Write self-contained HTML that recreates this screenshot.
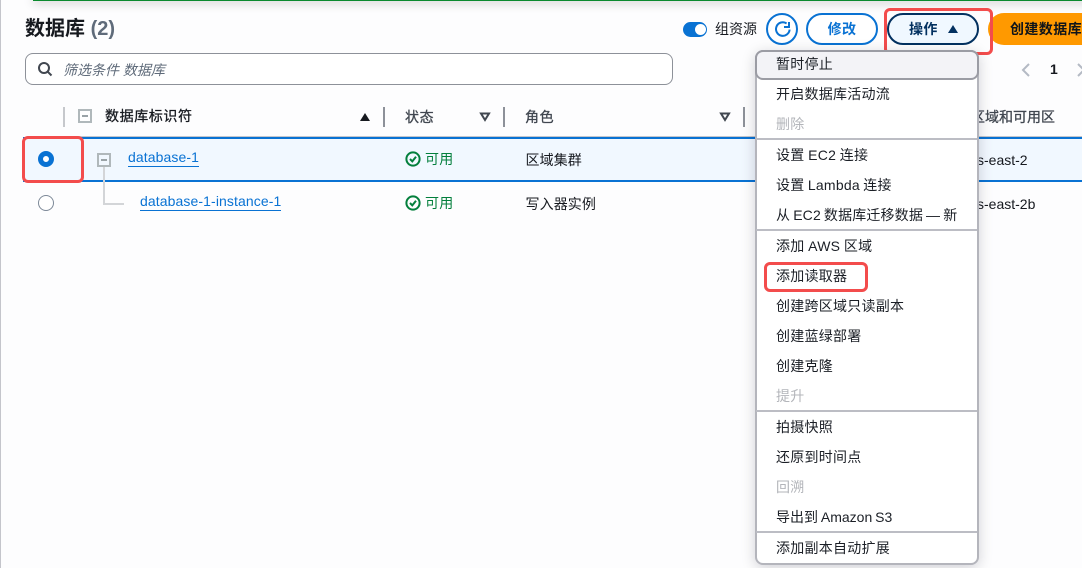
<!DOCTYPE html>
<html lang="zh"><head><meta charset="utf-8"><style>
html,body{margin:0;padding:0}
body{width:1082px;height:568px;position:relative;overflow:hidden;background:#fdfdfe;font-family:"Liberation Sans","Noto Sans CJK SC",sans-serif;font-size:14px;color:#16191f}
.a{position:absolute;white-space:nowrap;line-height:20px}
.b{position:absolute}
.lnk{color:#0972d3;border-bottom:1px solid #0972d3;line-height:17px;letter-spacing:.1px}
.sep{position:absolute;width:2px;height:20px;top:107px;background:#8d9199}
.hd{font-weight:400;color:#414750;letter-spacing:.6px;-webkit-text-stroke:.3px #414750}
.mi{position:absolute;left:776px;line-height:20px;white-space:nowrap;letter-spacing:.25px;color:#1b1f26}
.dis{color:#b3b5ba}
.div{position:absolute;left:756px;width:221px;height:2px;background:#bcbdc4}
.red{position:absolute;border:3px solid #f34c4c;border-radius:6px;box-sizing:border-box}
.btn{font-weight:700;font-size:14px;letter-spacing:.4px}
</style></head><body>
<div class="b" style="left:0;top:0;width:1px;height:568px;background:#c4c5cb"></div>
<div class="b" style="left:33px;top:-4px;width:1060px;height:5px;background:#0a8a2e;box-shadow:0 2px 10px rgba(0,0,0,.24)"></div>
<div class="a" style="left:25px;top:17px;font-size:20px;line-height:24px;font-weight:700;color:#16191f">数据库 <span style="color:#5f6b7a">(2)</span></div>
<div class="b" style="left:25px;top:53px;width:648px;height:32px;box-sizing:border-box;border:1px solid #8d9199;border-radius:8px;background:#fff"></div>
<svg class="b" style="left:37px;top:61px" width="16" height="16" viewBox="0 0 16 16" fill="none" stroke="#414750" stroke-width="2"><circle cx="7" cy="7" r="5"/><path d="M10.7 10.7 14.5 14.5"/></svg>
<div class="a" style="left:63px;top:60px;font-style:italic;color:#5f6b7a;font-size:14px">筛选条件 数据库</div>
<div class="b" style="left:683px;top:22px;width:24px;height:15px;border-radius:8px;background:#0972d3"></div>
<div class="b" style="left:695px;top:24px;width:11px;height:11px;border-radius:50%;background:#fff"></div>
<div class="a" style="left:715px;top:19px;font-size:14px;color:#16191f">组资源</div>
<div class="b" style="left:766px;top:13px;width:32px;height:32px;box-sizing:border-box;border:2px solid #0972d3;border-radius:50%;background:#fff"></div>
<svg class="b" style="left:775px;top:21px" width="16" height="16" viewBox="0 0 16 16" fill="none" stroke="#0972d3" stroke-width="2"><path d="M14.6 8.6A6.8 6.8 0 1 1 11.6 2.4"/><path d="M14 1V6H9"/></svg>
<div class="a btn" style="left:806px;top:13px;width:72px;height:32px;box-sizing:border-box;border:2px solid #0972d3;border-radius:16px;background:#fff;color:#0972d3;text-align:center;line-height:28px">修改</div>
<div class="b" style="left:887px;top:13px;width:92px;height:32px;box-sizing:border-box;border:2px solid #033160;border-radius:16px;background:#f0f8ff"></div>
<div class="a btn" style="left:909px;top:19px;color:#033160">操作</div>
<div class="b" style="left:948px;top:25px;width:0;height:0;border-left:5.5px solid transparent;border-right:5.5px solid transparent;border-bottom:8px solid #033160"></div>
<div class="b" style="left:988px;top:13px;width:110px;height:32px;border-radius:16px;background:#ff9900"></div>
<div class="a btn" style="left:1010px;top:19px;color:#0f141a">创建数据库</div>
<div class="red" style="left:884px;top:8px;width:109px;height:47px"></div>
<svg class="b" style="left:1021px;top:62px" width="10" height="16" viewBox="0 0 10 16" fill="none" stroke="#b4bac4" stroke-width="2"><path d="M8 2 2 8 8 14"/></svg>
<div class="a" style="left:1050px;top:59px;font-weight:700;font-size:14px;color:#16191f">1</div>
<svg class="b" style="left:1076px;top:62px" width="10" height="16" viewBox="0 0 10 16" fill="none" stroke="#b4bac4" stroke-width="2"><path d="M2 2 8 8 2 14"/></svg>

<div class="b" style="left:63px;top:107px;width:2px;height:20px;background:#c6c8cc"></div>
<div class="b" style="left:78px;top:109px;width:14px;height:14px;box-sizing:border-box;border:2px solid #b0b8bb;background:#fff"></div>
<div class="b" style="left:82px;top:115px;width:6px;height:2px;background:#9aa3a7"></div>
<div class="a hd" style="left:105px;top:106px;color:#16191f;-webkit-text-stroke:.3px #16191f">数据库标识符</div>
<div class="b" style="left:360px;top:113px;width:0;height:0;border-left:5.5px solid transparent;border-right:5.5px solid transparent;border-bottom:8px solid #16191f"></div>
<div class="sep" style="left:383px"></div>
<div class="a hd" style="left:405px;top:107px">状态</div>
<svg class="b" style="left:479px;top:112px" width="12" height="10" viewBox="0 0 12 10" fill="none" stroke="#414750" stroke-width="2"><path d="M2 1.5H10L6 8Z"/></svg>
<div class="sep" style="left:503px"></div>
<div class="a hd" style="left:525px;top:107px">角色</div>
<svg class="b" style="left:719px;top:112px" width="12" height="10" viewBox="0 0 12 10" fill="none" stroke="#414750" stroke-width="2"><path d="M2 1.5H10L6 8Z"/></svg>
<div class="sep" style="left:743px"></div>
<div class="a hd" style="left:975px;top:107px;width:82px;overflow:hidden;letter-spacing:0"><span style="margin-left:-4px">区域和可用区</span></div>
<div class="b" style="left:63px;top:136px;width:1019px;height:1px;background:#c4c6cc"></div>
<div class="b" style="left:23px;top:137px;width:1059px;height:45px;box-sizing:border-box;border:2px solid #0972d3;border-right:0;background:#f1f8ff"></div>
<div class="red" style="left:22px;top:136px;width:62px;height:47px"></div>
<div class="b" style="left:38px;top:151px;width:16px;height:16px;box-sizing:border-box;border:5px solid #0972d3;border-radius:50%;background:#fff"></div>
<div class="b" style="left:97px;top:153px;width:14px;height:14px;box-sizing:border-box;border:2px solid #b0b8bb"></div>
<div class="b" style="left:101px;top:159px;width:6px;height:2px;background:#9aa3a7"></div>
<div class="a lnk" style="left:128px;top:149px">database-1</div>
<div class="b" style="left:103px;top:167px;width:2px;height:36px;background:#d3d5d8"></div>
<div class="b" style="left:103px;top:203px;width:21px;height:2px;background:#d3d5d8"></div>
<div class="b" style="left:38px;top:195px;width:16px;height:16px;box-sizing:border-box;border:1px solid #7d8998;border-radius:50%;background:#fff"></div>
<div class="a lnk" style="left:140px;top:193px">database-1-instance-1</div>
<svg class="b" style="left:405px;top:151px" width="16" height="16" viewBox="0 0 16 16" fill="none" stroke="#037f3c" stroke-width="2"><circle cx="8" cy="8" r="6.6"/><path d="M5 8 7.3 10.4 11 5.8"/></svg>
<div class="a" style="left:425px;top:149px;color:#037f3c;letter-spacing:.2px">可用</div>
<svg class="b" style="left:405px;top:195px" width="16" height="16" viewBox="0 0 16 16" fill="none" stroke="#037f3c" stroke-width="2"><circle cx="8" cy="8" r="6.6"/><path d="M5 8 7.3 10.4 11 5.8"/></svg>
<div class="a" style="left:425px;top:193px;color:#037f3c;letter-spacing:.2px">可用</div>
<div class="a" style="left:525.5px;top:150px;letter-spacing:.1px">区域集群</div>
<div class="a" style="left:525.5px;top:194px;letter-spacing:.1px">写入器实例</div>
<div class="a" style="left:978px;top:150px;width:60px;overflow:hidden"><span style="margin-left:-1px">s-east-2</span></div>
<div class="a" style="left:978px;top:194px;width:70px;overflow:hidden"><span style="margin-left:-1px">s-east-2b</span></div>

<div class="b" style="left:755px;top:50px;width:224px;height:515px;box-sizing:border-box;border:2px solid #b4b5bc;border-radius:8px;background:#fff;box-shadow:0 3px 14px rgba(0,0,30,.18)"></div>
<div class="b" style="left:755px;top:50px;width:224px;height:30px;box-sizing:border-box;border:2px solid #9b9ca4;border-radius:8px;background:#f3f3f7"></div>
<div class="mi" style="top:54px">暂时停止</div>
<div class="mi" style="top:84px">开启数据库活动流</div>
<div class="mi dis" style="top:114px">删除</div>
<div class="div" style="top:138px"></div>
<div class="mi" style="top:145px;word-spacing:-.5px">设置 EC2 连接</div>
<div class="mi" style="top:175px;word-spacing:-.8px">设置 Lambda 连接</div>
<div class="mi" style="top:205px;word-spacing:-1px;letter-spacing:.15px">从 EC2 数据库迁移数据 — 新</div>
<div class="div" style="top:229px"></div>
<div class="mi" style="top:236px;word-spacing:-.5px">添加 AWS 区域</div>
<div class="mi" style="top:266px">添加读取器</div>
<div class="red" style="left:764px;top:262px;width:104px;height:30px"></div>
<div class="mi" style="top:296px">创建跨区域只读副本</div>
<div class="mi" style="top:326px">创建蓝绿部署</div>
<div class="mi" style="top:356px">创建克隆</div>
<div class="mi dis" style="top:386px">提升</div>
<div class="div" style="top:410px"></div>
<div class="mi" style="top:417px">拍摄快照</div>
<div class="mi" style="top:447px">还原到时间点</div>
<div class="mi dis" style="top:477px">回溯</div>
<div class="mi" style="top:507px;word-spacing:-1px;letter-spacing:0">导出到 Amazon S3</div>
<div class="div" style="top:531px"></div>
<div class="mi" style="top:538px">添加副本自动扩展</div>
</body></html>
